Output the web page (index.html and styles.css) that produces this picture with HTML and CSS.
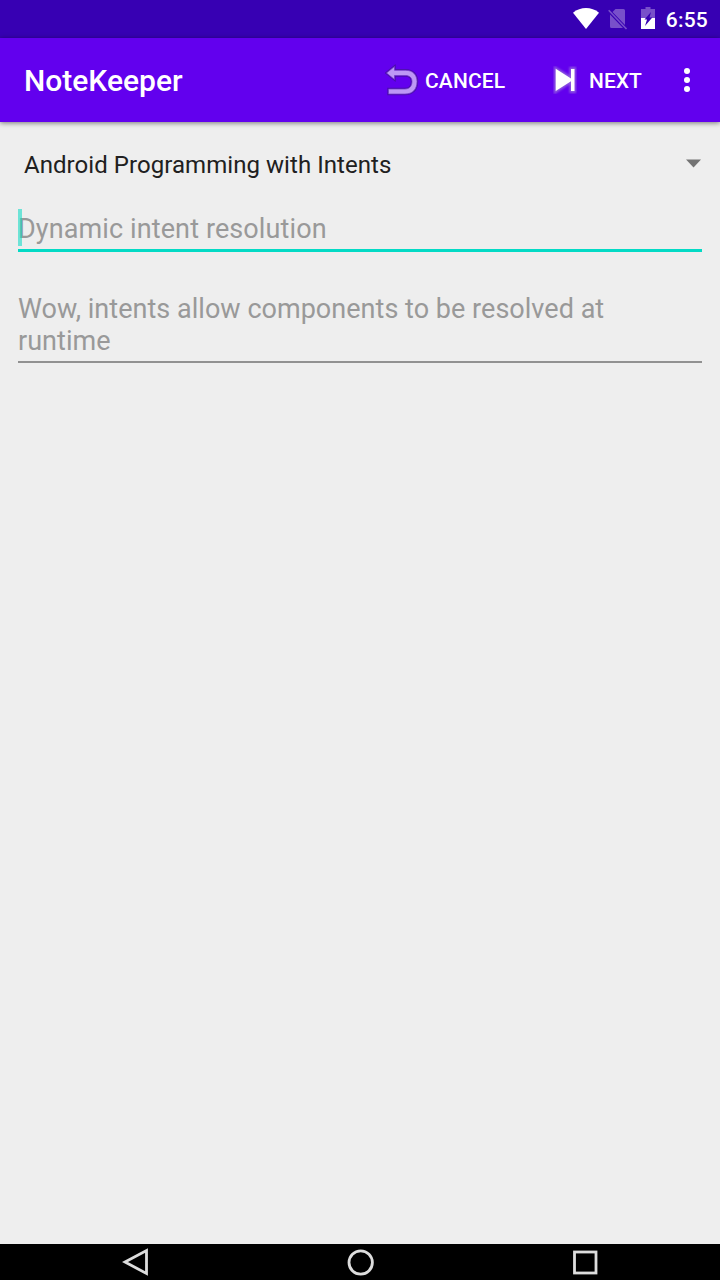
FILE: index.html
```html
<!DOCTYPE html>
<html lang="en">
<head>
<meta charset="utf-8">
<title>NoteKeeper</title>
<link rel="stylesheet" href="styles.css">
</head>
<body>
<div class="screen">
  <div class="status">
    <svg class="wifi" width="26" height="21" viewBox="0 0 26 21"><path d="M0 4.700C7.500-1.500 18.500-1.500 26 4.700L13 21Z" fill="#fff"/></svg>
    <svg class="sim" width="20" height="22" viewBox="0 0 20 22"><path d="M7.500 1H15.500Q17 1 17 2.500V17L4.500 4ZM2 6.500L15 20H3.500Q2 20 2 18.500Z" fill="#7850ca"/><path d="M.7 2.200L18.500 21" stroke="#7850ca" stroke-width="1.600"/></svg>
    <svg class="battery" width="14" height="22" viewBox="0 0 14 22"><path d="M4.500 0H9.500V2H14V11H0V2H4.500Z" fill="#7850ca"/><path d="M0 11H14V22H0Z" fill="#fff"/><path d="M10 5L3.500 12.500H6L4 19L11.300 10.500H8.500Z" fill="#3700b3"/></svg>
    <span class="time">6:55</span>
  </div>
  <header class="appbar">
    <h1 class="title">NoteKeeper</h1>
    <button class="action cancel">
      <svg class="undo" width="34" height="32" viewBox="0 0 34 32">
        <path class="undo-edge" d="M1.500 9L9.500 2.500V6.300H20.500C28 6.300 32 11 32 17.500C32 25.500 27.500 30 20 30H3.500V25H20C24.500 25 27 22 27 17.500C27 13.800 24.500 11.500 20.500 11.500H9.500V15.500Z"/>
        <path class="undo-fill" d="M1.500 9L9.500 2.500V6.300H20.500C28 6.300 32 11 32 17.500C32 25.500 27.500 30 20 30H3.500V25H20C24.500 25 27 22 27 17.500C27 13.800 24.500 11.500 20.500 11.500H9.500V15.500Z"/>
      </svg>
      <span>CANCEL</span>
    </button>
    <button class="action next">
      <svg class="skip" width="24" height="28" viewBox="0 0 24 28">
        <path class="skip-glow" d="M2.500 2.500L18 12V2.500H21.500V25.500H18V15.500L2.500 25.500Z"/>
        <path d="M2.700 2.800L18 12.500V3H21.500V25H18V15.200L2.700 25Z" fill="#fff"/>
      </svg>
      <span>NEXT</span>
    </button>
    <svg class="more" width="6" height="24" viewBox="0 0 6 24" fill="#fff"><circle cx="3" cy="3" r="3"/><circle cx="3" cy="12" r="3"/><circle cx="3" cy="21" r="3"/></svg>
  </header>
  <main class="content">
    <div class="spinner">
      <span>Android Programming with Intents</span>
      <svg class="caret" width="15" height="9" viewBox="0 0 15 9"><path d="M0 .5H15L7.500 8.500Z" fill="#737373"/></svg>
    </div>
    <div class="field focused"><i class="cursor"></i>Dynamic intent resolution</div>
    <div class="field body">Wow, intents allow components to be resolved at <br>runtime</div>
  </main>
  <nav class="navbar">
    <svg width="28" height="30" viewBox="0 0 28 30"><path d="M3 15L24.500 3.500V26.500Z"/></svg>
    <svg width="28" height="30" viewBox="0 0 28 30"><circle cx="13.700" cy="15.500" r="11.700"/></svg>
    <svg width="28" height="30" viewBox="0 0 28 30"><rect x="2.500" y="5" width="21.500" height="21"/></svg>
  </nav>
</div>
</body>
</html>
```
FILE: styles.css
```css
* { box-sizing: border-box; }
body { margin: 0; font-family: Roboto, sans-serif; }
.screen { width: 720px; height: 1280px; display: flex; flex-direction: column; background: #eee; overflow: hidden; }
svg { display: block; flex: none; }
.status { height: 38px; flex: none; display: flex; align-items: flex-start; justify-content: flex-end; padding-right: 12px; background: #3700b3; color: #fff; }
.wifi { margin: 8px 9px 0 0; }
.sim { margin: 8px 13px 0 0; }
.battery { margin: 7px 11px 0 0; }
.time { font-size: 21px; line-height: 38px; font-weight: 500; margin-top: 1px; letter-spacing: .2px; }
.appbar { height: 84px; flex: none; display: flex; align-items: center; padding: 0 30px 0 24px; background: #6200ee; color: #fff; box-shadow: 0 1px 5px rgba(0, 0, 0, .5); position: relative; }
.title { margin: 0; padding-top: 2px; font-size: 30px; line-height: 36px; font-weight: 500; width: 361px; }
.action { display: flex; align-items: center; border: 0; padding: 0; background: none; color: #fff; font: 500 21px/26px Roboto, sans-serif; }
.action span { padding-top: 2px; }
.cancel { gap: 6px; width: 168px; letter-spacing: .15px; }
.next { gap: 12px; width: 131px; }
.undo-edge { fill: #43109c; stroke: #43109c; stroke-width: 2.4; opacity: .8; filter: blur(.6px); }
.undo-fill { fill: #bd98f5; stroke: #7138c9; stroke-width: .7; }
.skip-glow { fill: #b79be3; stroke: #a98bd9; stroke-width: 3; opacity: .65; filter: blur(.8px); }
.content { flex: 1; padding: 0 18px; }
.spinner { display: flex; align-items: center; justify-content: space-between; height: 85px; padding: 1px 1.5px 0 6px; font-size: 24px; line-height: 32px; letter-spacing: .055px; color: #202020; }
.caret { margin-top: -3px; }
.field { font-size: 27px; line-height: 32px; letter-spacing: .11px; color: #999; }
.focused { position: relative; height: 45px; padding-top: 6px; border-bottom: 3px solid #03dac5; }
.cursor { position: absolute; left: 0; top: 2px; width: 4px; height: 37px; background: #03dac5; opacity: .55; }
.body { margin-top: 41px; height: 70px; letter-spacing: .03px; border-bottom: 2px solid #919191; }
.navbar { height: 36px; flex: none; display: flex; justify-content: space-between; align-items: center; padding: 0 120px 0 122px; background: #000; }
.navbar svg { fill: none; stroke: #ddd; stroke-width: 2.8; }
```
